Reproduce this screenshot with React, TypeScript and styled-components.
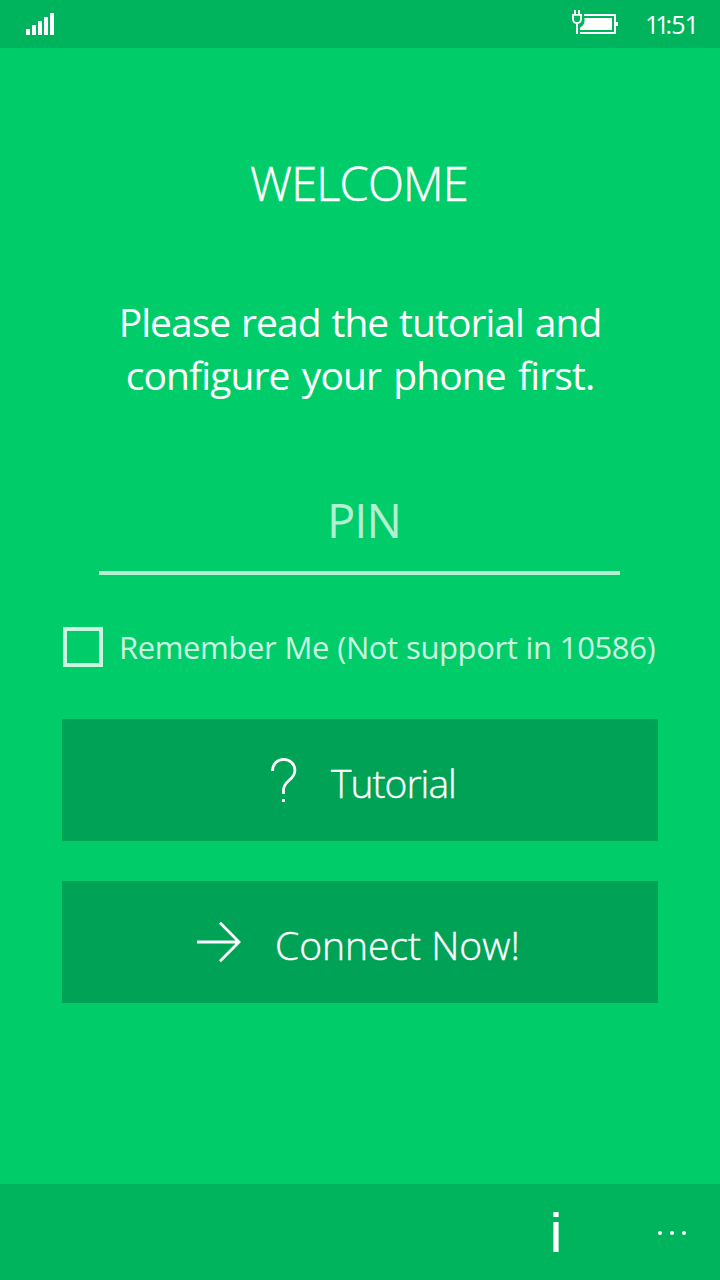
import React from "react";
import styled, { createGlobalStyle } from "styled-components";

const GlobalStyle = createGlobalStyle`
  * { box-sizing: border-box; }
  html, body { margin: 0; padding: 0; background: #00cd6a; }
  body { font-family: "Open Sans", "Noto Sans", sans-serif; color: #fff; }
`;

const Screen = styled.div`
  width: 720px;
  height: 1280px;
  display: flex;
  flex-direction: column;
  background: #00cd6a;
  overflow: hidden;
`;

const StatusBar = styled.header`
  height: 48px;
  flex: none;
  display: flex;
  align-items: center;
  background: #00b45d;
  padding: 0 24px 0 26px;
`;

const StatusSpacer = styled.div`
  flex: 1;
`;

const Clock = styled.time`
  font-size: 25px;
  line-height: 48px;
  width: 51px;
  margin-left: 27px;
  white-space: nowrap;
`;

const ClockPart = styled.span<{ $spacing: number }>`
  letter-spacing: ${(p) => p.$spacing}px;
`;

const Content = styled.main`
  flex: 1;
  display: flex;
  flex-direction: column;
  padding: 0 62px;
`;

const Title = styled.h1`
  margin: 103px 2px 0 0;
  font-size: 47px;
  line-height: 64px;
  font-weight: 300;
  text-align: center;
  letter-spacing: -0.8px;
  -webkit-text-stroke: 0.5px currentColor;
`;

const Intro = styled.p`
  margin: 80px 0 0;
  font-size: 39px;
  line-height: 53px;
  text-align: center;
  white-space: nowrap;
`;

const IntroLine = styled.span<{ $spacing: number; $word: number }>`
  display: block;
  letter-spacing: ${(p) => p.$spacing}px;
  word-spacing: ${(p) => p.$word}px;
`;

const PinField = styled.div`
  margin: 87px 38px 0 37px;
  height: 87px;
  border-bottom: 4px solid #b3f0d2;
  color: #b3f0d2;
  font-size: 47px;
  line-height: 64px;
  letter-spacing: -1px;
  text-align: center;
  padding-left: 9px;
`;

const Remember = styled.label`
  margin: 52px 0 0 1px;
  height: 40px;
  display: flex;
  align-items: center;
  color: #ccf5e1;
  font-size: 31px;
  line-height: 40px;
  letter-spacing: -0.4px;
  word-spacing: 0.6px;
  white-space: nowrap;
`;

const CheckBox = styled.span`
  width: 40px;
  height: 40px;
  flex: none;
  border: 4px solid #ccf5e1;
  margin-right: 16px;
`;

const ActionButton = styled.button<{ $top: number; $left: number; $gap: number }>`
  margin: ${(p) => p.$top}px 0 0;
  padding: 0 0 0 ${(p) => p.$left}px;
  height: 122px;
  border: 0;
  background: #00a256;
  color: #fff;
  display: flex;
  align-items: center;
  gap: ${(p) => p.$gap}px;
  font-family: inherit;
  font-weight: 300;
  font-size: 39px;
  line-height: 54px;
  white-space: nowrap;
`;

const ButtonText = styled.span<{ $spacing: number }>`
  letter-spacing: ${(p) => p.$spacing}px;
  padding-top: 6px;
  -webkit-text-stroke: 0.4px currentColor;
`;

const CommandBar = styled.footer`
  height: 96px;
  flex: none;
  display: flex;
  align-items: center;
  justify-content: flex-end;
  gap: 98px;
  padding-right: 33px;
  background: #00b45d;
`;

const BatterySvg = styled.svg`
  margin-bottom: 2px;
`;

const MoreSvg = styled.svg`
  margin-top: 2px;
`;

function SignalIcon() {
  return (
    <svg width="28" height="22" viewBox="0 0 28 22" fill="#fff" shapeRendering="crispEdges">
      <rect x="0" y="16" width="4" height="6" />
      <rect x="6" y="12" width="4" height="10" />
      <rect x="12" y="8" width="4" height="14" />
      <rect x="18" y="4" width="4" height="18" />
      <rect x="24" y="0" width="4" height="22" />
    </svg>
  );
}

function BatteryIcon() {
  return (
    <BatterySvg width="46" height="26" viewBox="0 0 46 26" fill="none" stroke="#fff">
      <path d="M12 5H43V23H8" strokeWidth="2" />
      <rect x="44" y="12" width="2" height="4" fill="#fff" stroke="none" />
      <path d="M12.5 8H40V20H8V17.5C10.5 16.5 12.5 14 12.5 11Z" fill="#fff" stroke="none" />
      <path d="M3 0V4M7 0V4M5 13V24" strokeWidth="2" />
      <path d="M0 4.8H10M1 5V9C1 11.5 2.5 13 5 13S9 11.5 9 9V5" strokeWidth="1.8" />
    </BatterySvg>
  );
}

function QuestionIcon() {
  return (
    <svg width="26" height="46" viewBox="0 0 26 46" fill="none" stroke="#fff" strokeWidth="2.8">
      <path d="M1.5 14C1.5 7 6.5 2.4 12.7 2.4S23.9 7 23.9 13.5C23.9 23 12.5 23.5 12.5 33V37" />
      <rect x="11" y="42.2" width="3" height="2.8" fill="#fff" stroke="none" />
    </svg>
  );
}

function ArrowIcon() {
  return (
    <svg width="44" height="42" viewBox="0 0 44 42" fill="none" stroke="#fff" strokeWidth="2.8">
      <path d="M0 21H42M23 1.7L42 21L23 40.3" />
    </svg>
  );
}

function InfoIcon() {
  return (
    <svg width="6" height="40" viewBox="0 0 6 40" fill="#fff">
      <rect x="0.4" y="0" width="5.2" height="5" />
      <rect x="0.4" y="10" width="5.2" height="30" />
    </svg>
  );
}

function MoreIcon() {
  return (
    <MoreSvg width="30" height="4" viewBox="0 0 30 4" fill="#fff">
      <circle cx="3" cy="2" r="2" />
      <circle cx="15" cy="2" r="2" />
      <circle cx="27" cy="2" r="2" />
    </MoreSvg>
  );
}

export default function App() {
  return (
    <Screen>
      <GlobalStyle />
      <StatusBar>
        <SignalIcon />
        <StatusSpacer />
        <BatteryIcon />
        <Clock>
          <ClockPart $spacing={-4}>11</ClockPart>
          <ClockPart $spacing={-1}>:</ClockPart>
          <ClockPart $spacing={-0.6}>51</ClockPart>
        </Clock>
      </StatusBar>
      <Content>
        <Title>WELCOME</Title>
        <Intro>
          <IntroLine $spacing={-0.95} $word={1.6}>Please read the tutorial and</IntroLine>
          <IntroLine $spacing={-0.9} $word={3}>configure your phone first.</IntroLine>
        </Intro>
        <PinField>PIN</PinField>
        <Remember>
          <CheckBox />
          Remember Me (Not support in 10586)
        </Remember>
        <ActionButton $top={52} $left={209} $gap={34}>
          <QuestionIcon />
          <ButtonText $spacing={-1}>Tutorial</ButtonText>
        </ActionButton>
        <ActionButton $top={40} $left={135} $gap={34}>
          <ArrowIcon />
          <ButtonText $spacing={0}>Connect Now!</ButtonText>
        </ActionButton>
      </Content>
      <CommandBar>
        <InfoIcon />
        <MoreIcon />
      </CommandBar>
    </Screen>
  );
}
